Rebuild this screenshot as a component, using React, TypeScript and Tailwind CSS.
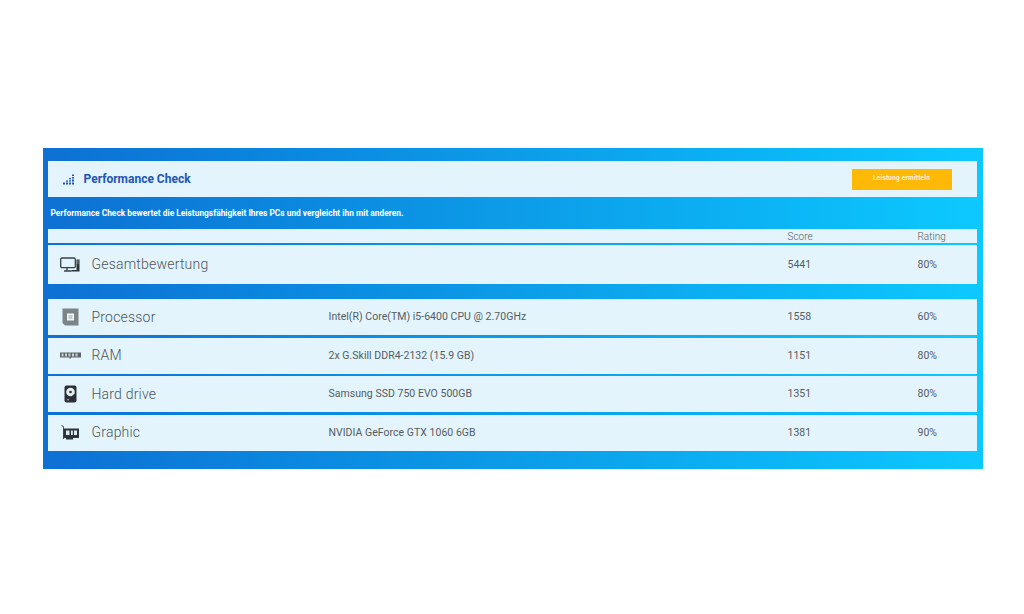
import React from "react";

const Monitor = () => (
  <svg width="20" height="16" viewBox="0 0 20 16" fill="none">
    <rect x="0.7" y="1" width="14.6" height="9.6" rx="1.2" stroke="#3a4248" strokeWidth="1.3" />
    <path d="M7 11v2.2M4 14h7.5" stroke="#3a4248" strokeWidth="1.4" />
    <path d="M16.5 2.5H19.5V14.5H11.5V13H16.5Z" fill="#2d3439" />
    <path d="M17.5 4h1M17.5 6h1" stroke="#e3f4fd" strokeWidth="0.8" />
  </svg>
);
const Cpu = () => (
  <svg width="17" height="18" viewBox="0 0 17 18">
    <path d="M0.5 0.5H16.5V17.5H3L0.5 15Z" fill="#7d8488" />
    <rect x="5" y="5.5" width="7" height="7" fill="#eef7fb" />
    <rect x="6.5" y="7" width="4" height="4" fill="#c5ccd0" />
  </svg>
);
const Ram = () => (
  <svg width="21" height="7" viewBox="0 0 21 7">
    <path d="M0 0.5H21V5.5H11V6.5H9.5V5.5H0Z" fill="#5c6468" />
    <path d="M1.5 1.5h2v3h-2zM5 1.5h2v3H5zM8.5 1.5h2v3h-2zM12 1.5h2v3h-2zM15.5 1.5h2v3h-2z" fill="#c8d0d4" />
  </svg>
);
const Hdd = () => (
  <svg width="13" height="18" viewBox="0 0 13 18">
    <rect x="0.5" y="0.5" width="12" height="17" rx="2" fill="#2a3034" />
    <circle cx="6.5" cy="7" r="4.3" fill="#e6eef2" />
    <circle cx="6.5" cy="7" r="1.3" fill="#2a3034" />
    <path d="M10 9.5L6.5 13.5" stroke="#2a3034" strokeWidth="1" />
    <path d="M3 14.8h2" stroke="#e6eef2" strokeWidth="0.8" />
  </svg>
);
const Gpu = () => (
  <svg width="18" height="16" viewBox="0 0 18 16">
    <path d="M0.5 0.5L2.5 1.5V14" stroke="#3a4248" strokeWidth="0.9" fill="none" />
    <path d="M2.5 3.5H18V13H12V14.5H5V13H2.5Z" fill="#2d3439" />
    <rect x="5" y="5.5" width="3.5" height="4.5" fill="#dcebf3" />
    <rect x="10" y="5.5" width="1.8" height="4.5" fill="#dcebf3" />
    <rect x="13" y="5.5" width="3" height="4.5" fill="#dcebf3" />
  </svg>
);
const Bars = () => (
  <svg width="11" height="11" viewBox="0 0 11 11" fill="#1d56b4">
    <path d="M0 8.5h2v2H0zM3 6.5h2v1.2H3zM3 8.5h2v2H3zM6 4h2v1.3H6zM6 6.2h2v1.3H6zM6 8.5h2v2H6zM9 0.5h2v1.5H9zM9 3h2v1.5H9zM9 5.5h2v2H9zM9 8.5h2v2H9z" />
  </svg>
);

const rows = [
  { icon: <Cpu />, name: "Processor", detail: "Intel(R) Core(TM) i5-6400 CPU @ 2.70GHz", score: "1558", rating: "60%", h: "h-9" },
  { icon: <Ram />, name: "RAM", detail: "2x G.Skill DDR4-2132 (15.9 GB)", score: "1151", rating: "80%", h: "h-9" },
  { icon: <Hdd />, name: "Hard drive", detail: "Samsung SSD 750 EVO 500GB", score: "1351", rating: "80%", h: "h-9" },
  { icon: <Gpu />, name: "Graphic", detail: "NVIDIA GeForce GTX 1060 6GB", score: "1381", rating: "90%", h: "h-9" },
];

function Row({ icon, name, detail, score, rating, h }: { icon: React.ReactNode; name: string; detail?: string; score: string; rating: string; h: string }) {
  return (
    <div className={`${h} flex items-center bg-[#e3f4fd] text-[#555c61]`}>
      <div className="w-[44px] flex justify-center shrink-0 pl-px">{icon}</div>
      <div className="w-[237px] shrink-0 text-[14px] font-light tracking-[0.2px] text-[#4d5459]">{name}</div>
      <div className="w-[459px] shrink-0 text-[10.5px] tracking-[0.03px]">{detail}</div>
      <div className="w-[130px] shrink-0 text-[10.5px]">{score}</div>
      <div className="text-[10.5px]">{rating}</div>
    </div>
  );
}

export default function App() {
  return (
    <div className="h-[614px] bg-white pt-[148px] pl-[43px] font-['Roboto',sans-serif]">
      <div className="w-[940px] h-[321px] pt-[13px] pl-[4.5px] pr-[6px] bg-gradient-to-r from-[#0e70d3] via-[#0d9ce8] to-[#0dc9ff]">
        <div className="h-9 flex items-center bg-[#e3f4fd]">
          <div className="w-[36px] flex justify-center pl-[6px] shrink-0"><Bars /></div>
          <div className="text-[12px] font-bold text-[#1d56b4]">Performance Check</div>
          <div className="ml-[661px] w-[100px] h-[21px] flex items-center justify-center bg-[#fdb905] text-[6.5px] font-bold tracking-[0.2px] text-[#fdf3d0]">Leistung ermitteln</div>
        </div>
        <div className="h-8 flex items-center pl-[3px] text-[8.4px] font-bold text-white">
          Performance Check bewertet die Leistungsfähigkeit Ihres PCs und vergleicht ihn mit anderen.
        </div>
        <div className="h-[14px] flex items-center bg-[#e3f4fd] text-[10px] text-[#555c61] font-light">
          <div className="ml-[740px] w-[130px]">Score</div>
          <div>Rating</div>
        </div>
        <div className="mt-[2px]">
          <Row icon={<Monitor />} name="Gesamtbewertung" score="5441" rating="80%" h="h-[39px]" />
        </div>
        <div className="mt-[15px] flex flex-col gap-[2.5px]">
          {rows.map((r) => <Row key={r.name} {...r} />)}
        </div>
      </div>
    </div>
  );
}
